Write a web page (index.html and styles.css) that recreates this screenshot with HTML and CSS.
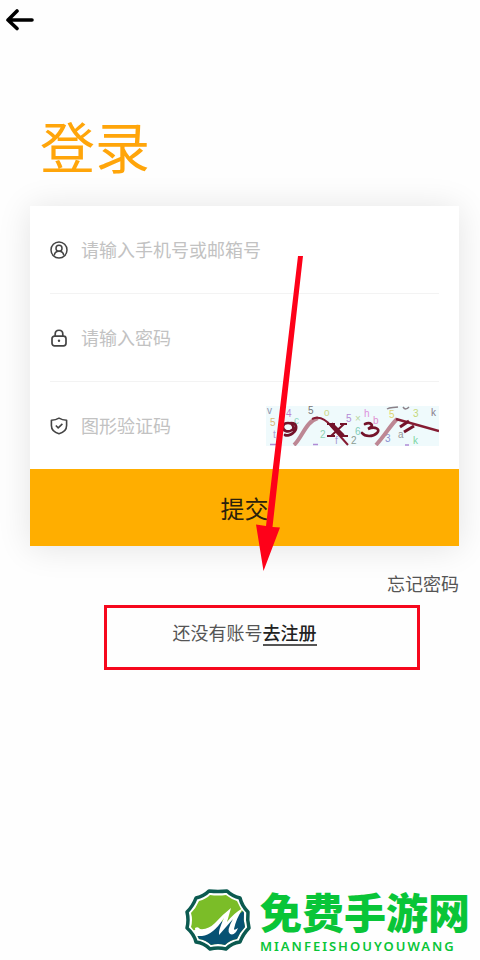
FILE: index.html
```html
<!DOCTYPE html>
<html lang="zh-CN">
<head>
<meta charset="utf-8">
<meta name="viewport" content="width=device-width, initial-scale=1">
<title>登录</title>
<link rel="stylesheet" href="styles.css">
</head>
<body>
<div class="page">
  <header class="topbar">
    <button class="back" type="button" aria-label="返回">
      <svg width="28" height="22" viewBox="0 0 28 22" fill="none" stroke="#000" stroke-width="3.6" stroke-linecap="round" stroke-linejoin="round"><path d="M2 11H26M11 2L2 11L11 19.500"/></svg>
    </button>
  </header>
  <main class="content">
    <h1 class="title">登录</h1>
    <form class="card">
      <div class="field">
        <label for="account" aria-label="账号">
          <svg class="icon" viewBox="0 0 18 18" fill="none" stroke="#444" stroke-width="1.5"><circle cx="9" cy="9" r="8"/><circle cx="9" cy="7.200" r="3"/><path d="M4.300 14.500C4.500 11.500 6.500 10.200 9 10.200S13.500 11.500 13.700 14.500"/></svg>
        </label>
        <input id="account" type="text" placeholder="请输入手机号或邮箱号">
      </div>
      <div class="field">
        <label for="password" aria-label="密码">
          <svg class="icon" viewBox="0 0 18 18" fill="none" stroke="#444" stroke-width="1.700"><rect x="2" y="7.200" width="14" height="9.600" rx="2.500"/><path d="M5.200 7V5C5.200 0 12.800 0 12.800 5V7"/><circle cx="9" cy="11.700" r="1.200" fill="#444" stroke="none"/></svg>
        </label>
        <input id="password" type="password" placeholder="请输入密码">
      </div>
      <div class="field">
        <label for="captcha" aria-label="验证码">
          <svg class="icon" viewBox="0 0 18 18" fill="none" stroke="#444" stroke-width="1.600" stroke-linejoin="round"><path d="M9 1.200C11.500 2.800 13.800 3.200 16.600 3.200V8.500C16.600 13 13.500 15.500 9 16.800C4.500 15.500 1.400 13 1.400 8.500V3.200C4.200 3.200 6.500 2.800 9 1.200Z"/><path d="M5.800 8.500L8.200 10.800L12.400 6.800"/></svg>
        </label>
        <input id="captcha" type="text" placeholder="图形验证码">
        <svg class="captcha" viewBox="0 0 173 40" role="img" aria-label="图形验证码">
          <rect width="173" height="40" fill="#effafc"/>
          <g class="noise">
            <text x="1" y="8" fill="#8d93ad">v</text><text x="20" y="11" fill="#bd83cf">4</text>
            <text x="42" y="8" fill="#777">5</text><text x="58" y="10" fill="#cbd889">o</text>
            <text x="4" y="20" fill="#d8b878">5</text><text x="28" y="18" fill="#8fd6c4">c</text>
            <text x="7" y="32" fill="#a6a0d8">t</text><text x="54" y="32" fill="#8fd3b3">2</text>
            <text x="69" y="38" fill="#a797cf">f</text><text x="80" y="16" fill="#b38bd5">5</text>
            <text x="89" y="16" fill="#b8d7a0">×</text><text x="98" y="11" fill="#dd91dc">h</text>
            <text x="107" y="18" fill="#df8fd0">b</text><text x="85" y="38" fill="#8b9c91">2</text>
            <text x="89" y="29" fill="#80cdb9">6</text><text x="123" y="12" fill="#dfd46f">5</text>
            <text x="119" y="36" fill="#8c91d0">3</text><text x="147" y="11" fill="#c4d879">3</text>
            <text x="165" y="10" fill="#887d8c">k</text><text x="132" y="32" fill="#999">a</text>
            <text x="147" y="38" fill="#7bd5a2">k</text>
          </g>
          <path d="M4 38.500H10M47 38.500H52M139 39H143" stroke="#b08bd5" stroke-width="1.500"/>
          <path d="M121 3C124 1 127 2 132 1M137 1C139 4 141 3 143 1" fill="none" stroke="#8b8088" stroke-width="1.500"/>
          <path d="M28 39C36 32 40 15 52 12" fill="none" stroke="#bd8794" stroke-width="4"/>
          <path d="M46 13C55 9 61 15 65 20L82 39" fill="none" stroke="#851b32" stroke-width="2"/>
          <path d="M110 39C119 29 124 20 131 13" fill="none" stroke="#bd8794" stroke-width="4"/>
          <path d="M130 13L173 25" fill="none" stroke="#851b32" stroke-width="2.500"/>
          <g fill="none" stroke="#74132a" stroke-width="2.700" stroke-linecap="round">
            <path d="M26 24C22 27 16 25 17 20C18 16 26 16 27 20C28 22 27 24 26 24M25 17C32 17 31 24 27 27C25 29 21 30 19 29"/>
            <path d="M99 18C104 16 110 19 102 23C109 20 115 23 111 27C107 31 99 31 96 27"/>
          </g>
          <path d="M65 18L77 30" stroke="#74132a" stroke-width="4.500"/>
          <path d="M78 18L65 30M61 18H69M74 18H81M61 30H69M74 30H82" stroke="#74132a" stroke-width="2"/>
          <path d="M134 21L143 15M138 26L148 20" stroke="#74132a" stroke-width="3"/>
        </svg>
      </div>
      <button class="submit" type="submit">提交</button>
      <svg class="pointer" width="60" height="316" viewBox="0 0 60 316" aria-hidden="true">
        <path d="M49 0H54L23.500 271L31 271.500L14.500 315L7 268.500L17 270Z" fill="#fe0119"/>
      </svg>
    </form>
    <a class="forgot" href="#">忘记密码</a>
    <p class="register">还没有账号<a href="#">去注册</a></p>
  </main>
  <footer class="brand">
    <svg class="logo" viewBox="0 0 68 64" aria-hidden="true">
      <path d="M25 3Q34 4 43 3Q48 8 56 10Q58 18 64 24Q63 32 65 40Q59 46 56 54Q48 55 42 61Q34 59 26 61Q20 55 12 54Q10 46 3 40Q5 32 3 24Q9 18 12 10Q20 8 25 3Z" fill="#fff" stroke="#0b5a50" stroke-width="3.500" stroke-linejoin="round"/>
      <path d="M26 7Q34 8 42 7Q47 11 53 13Q56 20 60 25Q59 32 61 39Q56 44 53 51Q46 52 41 57Q34 55 27 57Q22 52 15 51Q12 44 7 39Q9 32 7 25Q12 20 15 13Q22 11 26 7Z" fill="#7bbd28"/>
      <path d="M59 23L60 25Q59 32 61 39Q56 44 53 51Q46 52 41 57Q34 55 27 57Q22 52 15 51L13 47Q27 45 37 33L43 36Z" fill="#075273"/>
      <path d="M11 40Q14 38 16 41Q24 42 31 35Q38 27 47 20L43 34Q50 25 59 20Q52 31 50 41Q50 43 54 40Q51 48 46 46Q42 43 49 31L35 47Q34 43 40 30Q29 47 18 48H13L9 42Q12 43 11 40Z" fill="#fff"/>
    </svg>
    <div class="brand-text">
      <strong>免费手游网</strong>
      <span>MIANFEISHOUYOUWANG</span>
    </div>
  </footer>
</div>
</body>
</html>
```

FILE: styles.css
```css
* { box-sizing: border-box; }
body {
  margin: 0;
  background: #fefefe;
  color: #555;
  font-family: "Noto Sans CJK SC", sans-serif;
  font-size: 18px;
  line-height: 24px;
}
button, input { font: inherit; border: 0; padding: 0; background: none; }
.page {
  min-height: 100vh;
  display: flex;
  flex-direction: column;
  overflow: hidden;
}
.topbar { display: flex; padding: 9px 6px; }
.back { display: flex; }
.content {
  display: flex;
  flex-direction: column;
  padding: 74px 21px 24px 30px;
}
.title {
  margin: 0 0 32px;
  padding-left: 10px;
  color: #ffa50a;
  font-size: 55px;
  font-weight: 400;
  line-height: 60px;
}
.card {
  position: relative;
  background: #fff;
  box-shadow: 0 2px 32px rgba(0, 0, 0, 0.11);
}
.field {
  display: flex;
  align-items: center;
  height: 88px;
  margin: 0 20px;
  border-bottom: 1px solid #f3f3f3;
}
.field:nth-child(3) { border-bottom: 0; height: 87px; }
.field label { display: flex; flex: none; margin-right: 13px; }
.icon { width: 18px; height: 18px; }
.field input {
  flex: 1;
  min-width: 0;
  height: 28px;
  padding-bottom: 2px;
  outline: 0;
  color: #444;
}
.field input::placeholder { color: #c2c2c2; opacity: 1; }
.captcha { flex: none; width: 173px; height: 40px; }
.noise { font-family: "Liberation Sans", sans-serif; font-size: 10px; }
.submit {
  display: block;
  width: 100%;
  height: 77px;
  background: #ffae00;
  color: #2b210c;
  font-size: 24px;
}
.pointer {
  position: absolute;
  top: 50px;
  left: 50%;
  margin-left: 4px;
  pointer-events: none;
}
.forgot {
  align-self: flex-end;
  margin-top: 25px;
  color: #555;
  text-decoration: none;
}
.register {
  height: 65px;
  margin: 10px 39px 0 74px;
  padding: 12px 35px 0 0;
  border: 3px solid #f6081d;
  text-align: center;
}
.register a {
  display: inline-block;
  border-bottom: 2px solid #555;
  color: #222;
  font-weight: 500;
  text-decoration: none;
}
.brand {
  display: flex;
  justify-content: flex-end;
  align-items: center;
  gap: 8px;
  margin-top: auto;
  padding: 0 10px 6px 0;
}
.logo { width: 68px; height: 64px; }
.brand-text {
  display: flex;
  flex-direction: column;
  gap: 2px;
  color: #09c538;
}
.brand-text strong {
  font-size: 42px;
  font-weight: 900;
  line-height: 50px;
}
.brand-text span {
  font-family: "Noto Sans", sans-serif;
  font-size: 13px;
  font-weight: 600;
  line-height: 16px;
  letter-spacing: 2px;
}
```
